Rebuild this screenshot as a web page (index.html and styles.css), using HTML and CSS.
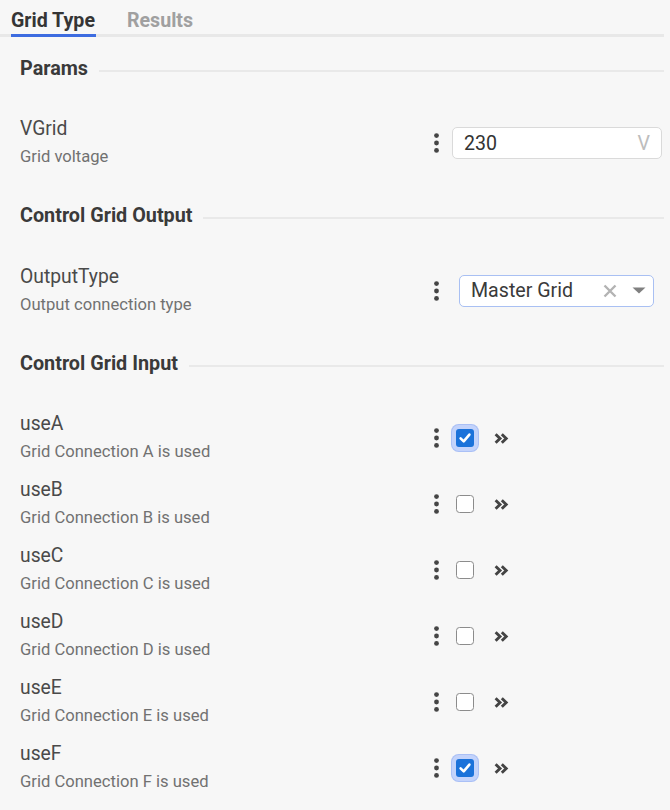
FILE: index.html
```html
<!DOCTYPE html>
<html>
<head>
<meta charset="utf-8">
<link rel="stylesheet" href="styles.css">
</head>
<body>
<div class="page">
  <div class="tabs">
    <div class="tab active">Grid Type</div>
    <div class="tab">Results</div>
  </div>

  <div class="section-head first"><span>Params</span><div class="rule"></div></div>
  <div class="row">
    <div class="info"><div class="label">VGrid</div><div class="desc">Grid voltage</div></div>
    <div class="ctrl">
      <svg class="dots" width="17" height="22" viewBox="0 0 17 22"><circle cx="8.5" cy="3.6" r="2.4"/><circle cx="8.5" cy="11" r="2.4"/><circle cx="8.5" cy="18.4" r="2.4"/></svg>
      <div class="input"><span class="val">230</span><span class="unit">V</span></div>
    </div>
  </div>

  <div class="section-head"><span>Control Grid Output</span><div class="rule"></div></div>
  <div class="row">
    <div class="info"><div class="label">OutputType</div><div class="desc">Output connection type</div></div>
    <div class="ctrl">
      <svg class="dots" width="17" height="22" viewBox="0 0 17 22"><circle cx="8.5" cy="3.6" r="2.4"/><circle cx="8.5" cy="11" r="2.4"/><circle cx="8.5" cy="18.4" r="2.4"/></svg>
      <div class="select">
        <span class="val">Master Grid</span>
        <svg class="clear" width="14" height="14" viewBox="0 0 14 14"><path d="M1.5 1.5 L12.5 12.5 M12.5 1.5 L1.5 12.5"/></svg>
        <svg class="caret" width="14" height="7" viewBox="0 0 14 7"><path d="M0.5 0.5 H13.5 L7 6.5 Z"/></svg>
      </div>
    </div>
  </div>

  <div class="section-head"><span>Control Grid Input</span><div class="rule"></div></div>

  <div class="row">
    <div class="info"><div class="label">useA</div><div class="desc">Grid Connection A is used</div></div>
    <div class="ctrl">
      <svg class="dots" width="17" height="22" viewBox="0 0 17 22"><circle cx="8.5" cy="3.6" r="2.4"/><circle cx="8.5" cy="11" r="2.4"/><circle cx="8.5" cy="18.4" r="2.4"/></svg>
      <div class="check on"><svg width="18" height="18" viewBox="0 0 18 18"><path d="M4.6 9.4 L7.7 12.4 L13.4 5.6"/></svg></div>
      <svg class="chev" width="15" height="11" viewBox="0 0 15 11"><path d="M1.6 1.3 L6 5.5 L1.6 9.7 M7.8 1.3 L12.2 5.5 L7.8 9.7"/></svg>
    </div>
  </div>
  <div class="row">
    <div class="info"><div class="label">useB</div><div class="desc">Grid Connection B is used</div></div>
    <div class="ctrl">
      <svg class="dots" width="17" height="22" viewBox="0 0 17 22"><circle cx="8.5" cy="3.6" r="2.4"/><circle cx="8.5" cy="11" r="2.4"/><circle cx="8.5" cy="18.4" r="2.4"/></svg>
      <div class="check"></div>
      <svg class="chev" width="15" height="11" viewBox="0 0 15 11"><path d="M1.6 1.3 L6 5.5 L1.6 9.7 M7.8 1.3 L12.2 5.5 L7.8 9.7"/></svg>
    </div>
  </div>
  <div class="row">
    <div class="info"><div class="label">useC</div><div class="desc">Grid Connection C is used</div></div>
    <div class="ctrl">
      <svg class="dots" width="17" height="22" viewBox="0 0 17 22"><circle cx="8.5" cy="3.6" r="2.4"/><circle cx="8.5" cy="11" r="2.4"/><circle cx="8.5" cy="18.4" r="2.4"/></svg>
      <div class="check"></div>
      <svg class="chev" width="15" height="11" viewBox="0 0 15 11"><path d="M1.6 1.3 L6 5.5 L1.6 9.7 M7.8 1.3 L12.2 5.5 L7.8 9.7"/></svg>
    </div>
  </div>
  <div class="row">
    <div class="info"><div class="label">useD</div><div class="desc">Grid Connection D is used</div></div>
    <div class="ctrl">
      <svg class="dots" width="17" height="22" viewBox="0 0 17 22"><circle cx="8.5" cy="3.6" r="2.4"/><circle cx="8.5" cy="11" r="2.4"/><circle cx="8.5" cy="18.4" r="2.4"/></svg>
      <div class="check"></div>
      <svg class="chev" width="15" height="11" viewBox="0 0 15 11"><path d="M1.6 1.3 L6 5.5 L1.6 9.7 M7.8 1.3 L12.2 5.5 L7.8 9.7"/></svg>
    </div>
  </div>
  <div class="row">
    <div class="info"><div class="label">useE</div><div class="desc">Grid Connection E is used</div></div>
    <div class="ctrl">
      <svg class="dots" width="17" height="22" viewBox="0 0 17 22"><circle cx="8.5" cy="3.6" r="2.4"/><circle cx="8.5" cy="11" r="2.4"/><circle cx="8.5" cy="18.4" r="2.4"/></svg>
      <div class="check"></div>
      <svg class="chev" width="15" height="11" viewBox="0 0 15 11"><path d="M1.6 1.3 L6 5.5 L1.6 9.7 M7.8 1.3 L12.2 5.5 L7.8 9.7"/></svg>
    </div>
  </div>
  <div class="row">
    <div class="info"><div class="label">useF</div><div class="desc">Grid Connection F is used</div></div>
    <div class="ctrl">
      <svg class="dots" width="17" height="22" viewBox="0 0 17 22"><circle cx="8.5" cy="3.6" r="2.4"/><circle cx="8.5" cy="11" r="2.4"/><circle cx="8.5" cy="18.4" r="2.4"/></svg>
      <div class="check on"><svg width="18" height="18" viewBox="0 0 18 18"><path d="M4.6 9.4 L7.7 12.4 L13.4 5.6"/></svg></div>
      <svg class="chev" width="15" height="11" viewBox="0 0 15 11"><path d="M1.6 1.3 L6 5.5 L1.6 9.7 M7.8 1.3 L12.2 5.5 L7.8 9.7"/></svg>
    </div>
  </div>
</div>
</body>
</html>
```

FILE: styles.css
```css
html, body {
  margin: 0;
  padding: 0;
  background: #f7f7f7;
}
body {
  font-family: Roboto, "Liberation Sans", sans-serif;
  color: #444;
}
.page {
  width: 664px;
  overflow: hidden;
}
.tabs {
  display: flex;
  gap: 31px;
  border-bottom: 3px solid #e8e8e8;
  height: 34px;
}
.tab {
  font-size: 19.6px;
  font-weight: 700;
  line-height: 26px;
  padding-top: 8px;
  color: #a0a0a0;
}
.tab.active {
  margin-left: 11px;
  color: #353535;
  border-bottom: 3px solid #3d6ce0;
  height: 26px;
  padding-right: 1px;
}
.section-head {
  display: flex;
  align-items: center;
  margin: 25.5px 0 26px 20px;
  height: 30px;
  font-size: 19.8px;
  font-weight: 700;
  line-height: 30px;
  color: #3a3a3a;
}
.section-head.first {
  margin-top: 17px;
}
.rule {
  flex: 1;
  height: 2px;
  background: #e9e9e9;
  margin-left: 11px;
  margin-top: 4px;
}
.row {
  display: flex;
  align-items: center;
  padding: 5.2px 0 4.8px 20px;
}
.info {
  flex: 1;
}
.label {
  font-size: 19.3px;
  line-height: 28px;
  color: #4a4a4a;
}
.desc {
  font-size: 16.6px;
  line-height: 28px;
  color: #717171;
}
.ctrl {
  width: 236px;
  display: flex;
  align-items: center;
}
.dots {
  fill: #454545;
  flex: none;
}
.input {
  margin-left: 7px;
  width: 210px;
  height: 32px;
  box-sizing: border-box;
  background: #fff;
  border: 1px solid #dadada;
  border-radius: 5px;
  display: flex;
  align-items: center;
  justify-content: space-between;
  padding: 0 11px 0 11px;
  font-size: 19.6px;
  color: #333;
}
.input .unit {
  color: #bdbdbd;
}
.select {
  margin-left: 14px;
  width: 195px;
  height: 32px;
  box-sizing: border-box;
  background: #fff;
  border: 1px solid #a9c0f3;
  border-radius: 5px;
  display: flex;
  align-items: center;
  padding: 0 7px 0 11px;
  font-size: 19.6px;
  color: #3a3a3a;
}
.select .val {
  flex: 1;
}
.clear {
  stroke: #b3b3b3;
  stroke-width: 2.4;
  fill: none;
  margin-right: 15px;
}
.caret {
  fill: #808080;
}
.check {
  margin-left: 11px;
  width: 18px;
  height: 18px;
  box-sizing: border-box;
  border: 1.5px solid #8c8c8c;
  border-radius: 3.5px;
  background: #fff;
  flex: none;
}
.check.on {
  border: none;
  background: #1b72da;
  box-shadow: 0 0 0 4px #c3d3fb, 0 0 0 5px #aac0f6;
  border-radius: 3px;
}
.check.on svg {
  display: block;
  fill: none;
  stroke: #fff;
  stroke-width: 2.6;
  stroke-linecap: round;
  stroke-linejoin: round;
}
.chev {
  margin-left: 20px;
  fill: none;
  stroke: #444;
  stroke-width: 2.9;
  flex: none;
}
```
